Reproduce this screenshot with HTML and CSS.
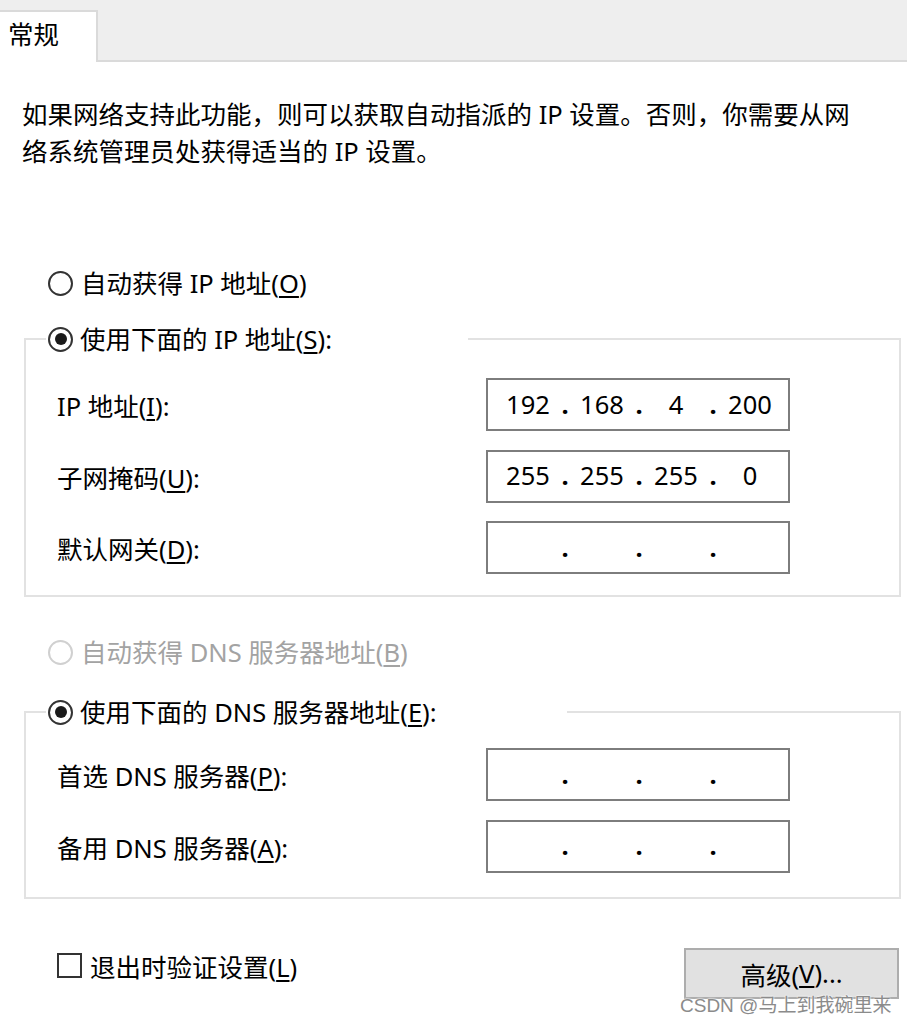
FILE: index.html
```html
<!DOCTYPE html>
<html lang="zh-CN">
<head>
<meta charset="utf-8">
<title>IP 设置</title>
<link rel="stylesheet" href="styles.css">
</head>
<body>
<div class="tabbar"><div class="tab">常规</div></div>
<main class="content">
  <p class="intro">如果网络支持此功能，则可以获取自动指派的 IP 设置。否则，你需要从网<br>络系统管理员处获得适当的 IP 设置。</p>

  <div class="choice choice-top"><span class="radio"></span><span>自动获得 IP 地址(<u>O</u>)</span></div>

  <fieldset class="group group-ip">
    <legend class="legend legend-ip"><span class="radio checked"></span><span>使用下面的 IP 地址(<u>S</u>):</span></legend>
    <div class="fields">
      <span class="label">IP 地址(<u>I</u>):</span>
      <div class="ipbox"><span>192</span><span class="dot">.</span><span>168</span><span class="dot">.</span><span>4</span><span class="dot">.</span><span>200</span></div>
      <span class="label">子网掩码(<u>U</u>):</span>
      <div class="ipbox"><span>255</span><span class="dot">.</span><span>255</span><span class="dot">.</span><span>255</span><span class="dot">.</span><span>0</span></div>
      <span class="label">默认网关(<u>D</u>):</span>
      <div class="ipbox"><span></span><span class="dot">.</span><span></span><span class="dot">.</span><span></span><span class="dot">.</span><span></span></div>
    </div>
  </fieldset>

  <div class="choice choice-dns-auto"><span class="radio disabled"></span><span class="disabled-text">自动获得 DNS 服务器地址(<u>B</u>)</span></div>

  <fieldset class="group group-dns">
    <legend class="legend legend-dns"><span class="radio checked"></span><span>使用下面的 DNS 服务器地址(<u>E</u>):</span></legend>
    <div class="fields">
      <span class="label">首选 DNS 服务器(<u>P</u>):</span>
      <div class="ipbox"><span></span><span class="dot">.</span><span></span><span class="dot">.</span><span></span><span class="dot">.</span><span></span></div>
      <span class="label">备用 DNS 服务器(<u>A</u>):</span>
      <div class="ipbox"><span></span><span class="dot">.</span><span></span><span class="dot">.</span><span></span><span class="dot">.</span><span></span></div>
    </div>
  </fieldset>

  <div class="footer">
    <div class="check-row"><span class="checkbox"></span><span>退出时验证设置(<u>L</u>)</span></div>
    <div class="button">高级(<u>V</u>)...</div>
  </div>
</main>
<div class="watermark">CSDN @马上到我碗里来</div>
</body>
</html>
```
FILE: styles.css
```css
* { box-sizing: border-box; }

body {
  margin: 0;
  width: 907px;
  height: 1025px;
  overflow: hidden;
  position: relative;
  background: #fff;
  color: #000;
  font-family: "Noto Sans", "Noto Sans CJK SC", sans-serif;
  font-size: 25.5px;
}

u {
  text-decoration-thickness: 1.5px;
  text-underline-offset: 3px;
}

.tabbar {
  height: 62px;
  background: #eeeeee;
  border-bottom: 2px solid #dadada;
  display: flex;
  align-items: flex-end;
}

.tab {
  width: 98px;
  height: 52px;
  margin-bottom: -2px;
  background: #fff;
  border-top: 2px solid #dadada;
  border-right: 2px solid #dadada;
  padding: 7px 0 0 8px;
  line-height: 30px;
}

.content {
  padding-left: 22px;
}

.intro {
  margin: 34px 0 0;
  line-height: 37px;
  white-space: nowrap;
}

.choice {
  display: flex;
  align-items: center;
  gap: 8px;
  height: 40px;
  line-height: 40px;
  white-space: nowrap;
}

.choice-top { margin: 93px 0 0 26px; }
.choice-dns-auto { margin: 35px 0 0 26px; }

.radio {
  flex: none;
  width: 25px;
  height: 25px;
  border: 2.5px solid #333;
  border-radius: 50%;
  background: #fff;
  display: flex;
  align-items: center;
  justify-content: center;
}

.radio.checked::after {
  content: "";
  width: 12px;
  height: 12px;
  border-radius: 50%;
  background: #1a1a1a;
}

.radio.disabled { border-color: #d0d0d0; }
.disabled-text { color: #a3a3a3; }

.group {
  width: 877px;
  min-width: 0;
  margin: 16px 0 0 2px;
  border: 2px solid #e2e2e2;
  padding: 19px 109px 21px 31px;
}

.group-dns {
  margin-top: 20px;
  padding: 16px 109px 24px 31px;
}

.legend {
  margin-left: -11px;
  padding: 0 2px;
  height: 40px;
  display: flex;
  align-items: center;
  gap: 7px;
  line-height: 40px;
  white-space: nowrap;
}

.legend-ip { width: 422px; }
.legend-dns { width: 521px; }

.fields {
  display: grid;
  grid-template-columns: 1fr 304px;
  row-gap: 18.5px;
  align-items: center;
}

.label { white-space: nowrap; }

.ipbox {
  height: 53px;
  border: 2px solid #7d7d7d;
  padding-left: 8px;
  display: grid;
  grid-template-columns: 64px 10px 64px 10px 64px 10px 64px;
  align-items: center;
  text-align: center;
  line-height: 1;
}

.dot { font-weight: 700; }

.footer {
  margin-top: 49px;
  padding: 0 8px 0 35px;
  display: flex;
  justify-content: space-between;
  align-items: flex-start;
}

.check-row {
  display: flex;
  align-items: center;
  gap: 8px;
  height: 36px;
  white-space: nowrap;
}

.checkbox {
  width: 25px;
  height: 25px;
  border: 2px solid #333;
  background: #fff;
}

.button {
  width: 215px;
  height: 51px;
  background: #e1e1e1;
  border: 2px solid #adadad;
  display: flex;
  align-items: center;
  justify-content: center;
}

.watermark {
  position: absolute;
  left: 680px;
  top: 994px;
  font-family: "Liberation Sans", "Noto Sans CJK SC", sans-serif;
  font-size: 19px;
  line-height: 24px;
  color: #8b8b8b;
  white-space: nowrap;
  text-shadow: 0 0 2px #fff, 0 0 2px #fff;
}
```
